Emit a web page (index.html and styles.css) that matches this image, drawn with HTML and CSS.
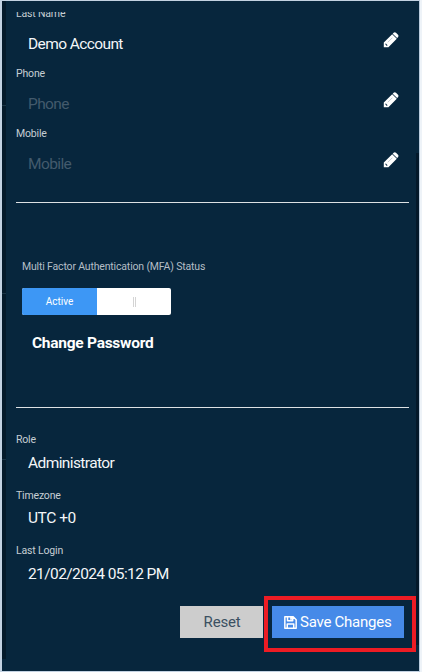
FILE: index.html
```
<!DOCTYPE html>
<html lang="en">
<head>
<meta charset="utf-8">
<title>Account</title>
<link rel="stylesheet" href="styles.css">
</head>
<body>
<svg class="defs" aria-hidden="true">
  <symbol id="pencil" viewBox="0 0 16 16">
    <path fill="#fff" d="M.8 10.6 9.2 2.2l4.6 4.6-8.4 8.4H.8zM9.7 1.7l.9-.9q1.2-.9 2.4 0l2 2q.9 1.2 0 2.4l-.9.9z"/>
    <path fill="#07263d" d="m2.7 11.3 1.9 1.9-.6.5h-.8v-.9H2.3z"/>
    <path stroke="#9aa8b3" stroke-width=".6" d="m4.8 10.3 4.6-4.6"/>
  </symbol>
</svg>
<main class="panel">
  <div class="shade"></div>
  <form class="content">
    <section class="contact">
      <div class="field"><label>Last Name</label><div class="row"><span class="value">Demo Account</span><svg class="pencil"><use href="#pencil"/></svg></div></div>
      <div class="field"><label>Phone</label><div class="row"><span class="value empty">Phone</span><svg class="pencil"><use href="#pencil"/></svg></div></div>
      <div class="field"><label>Mobile</label><div class="row"><span class="value empty">Mobile</span><svg class="pencil"><use href="#pencil"/></svg></div></div>
    </section>
    <section class="security">
      <div class="mfa">Multi Factor Authentication (MFA) Status</div>
      <div class="toggle"><span class="on">Active</span><span class="off"><i></i></span></div>
      <div class="password">Change Password</div>
    </section>
    <section class="details">
      <div class="info"><label>Role</label><span class="value">Administrator</span></div>
      <div class="info"><label>Timezone</label><span class="value utc">UTC +0</span></div>
      <div class="info"><label>Last Login</label><span class="value">21/02/2024 05:12 PM</span></div>
    </section>
    <div class="actions">
      <button type="button" class="reset">Reset</button>
      <div class="highlight">
        <button type="button" class="save">
          <svg class="disk" viewBox="0 0 14 14"><path fill="none" stroke="#fff" stroke-width="1.6" stroke-linejoin="round" d="M.9.9h9l3.2 3.2v9H.9zM3.5 13V8.7h7V13M3.8 1v4h5.6V1"/><path fill="#fff" d="M6.6 1h2v3h-2z"/></svg>
          <span>Save Changes</span>
        </button>
      </div>
    </div>
  </form>
  <div class="track"></div>
</main>
</body>
</html>
```
FILE: styles.css
```
* { box-sizing: border-box; }
body {
  margin: 0;
  height: 672px;
  padding: 1px 3px 1px 2px;
  background: linear-gradient(90deg, #c3d2e2 419px, #b9cbdd 419px, #b9cbdd 420px, #eef3f8 420px);
  font-family: Roboto, "Liberation Sans", sans-serif;
  overflow: hidden;
}
.defs { position: absolute; width: 0; height: 0; }
.panel { display: flex; height: 670px; background: #07263d; }
.shade {
  width: 4px;
  height: 658px;
  background:
    linear-gradient(#1b3546, #1b3546) 0 104px / 4px 1px no-repeat,
    linear-gradient(#1b3546, #1b3546) 0 292px / 4px 1px no-repeat,
    linear-gradient(#1b3546, #1b3546) 0 458px / 4px 1px no-repeat,
    #041a2b;
}
.track { width: 3px; height: 492px; margin-top: 152px; background: #03182a; }
.content { width: 410px; margin-top: 11px; padding-left: 10px; overflow: hidden; }
section { display: flow-root; width: 393px; }
.contact { height: 191px; border-bottom: 1px solid #dde1e4; }
.field { height: 59.75px; }
.field:first-child { margin-top: -6px; }
label { display: block; width: max-content; height: 16px; font-size: 10.5px; line-height: 16px; letter-spacing: -.17px; color: #c6ced4; white-space: nowrap; }
.row { display: flex; justify-content: space-between; height: 44px; padding: 0 10px 0 12px; }
.value { font-size: 15.5px; line-height: 44px; letter-spacing: -.6px; color: #f4f6f8; white-space: nowrap; }
.empty { color: #435a6c; }
.pencil { width: 16px; height: 16px; margin-top: 10px; }
.security { height: 205px; padding: 56px 0 0 6px; border-bottom: 1px solid #dde1e4; }
.mfa { height: 16px; font-size: 10.5px; line-height: 16px; letter-spacing: -.17px; color: #b4bec6; white-space: nowrap; }
.toggle { display: flex; width: 149px; height: 27px; margin-top: 13px; border-radius: 2px; background: #fff; overflow: hidden; }
.on { width: 75px; background: #3d97f5; color: #fff; font-size: 10px; line-height: 27px; text-align: center; }
.off { display: flex; flex: 1; align-items: center; justify-content: center; }
.off i { width: 3px; height: 10px; border: solid #d4d4d4; border-width: 0 1px; }
.password { width: max-content; margin: 16px 0 0 10px; font-size: 15.5px; font-weight: 700; line-height: 24px; letter-spacing: -.27px; color: #fff; white-space: nowrap; }
.details { padding-top: 24px; }
.info { height: 55.5px; }
.info .value { display: block; width: max-content; margin-left: 12px; line-height: 30px; }
.info .utc { line-height: 28px; letter-spacing: -.45px; }
.actions { display: flex; align-items: flex-start; margin-top: -2.5px; padding-left: 164px; }
button { border: 0; padding: 0; font-family: inherit; font-size: 15px; }
.reset { flex: none; width: 83px; height: 32px; margin: 10px 1px 0 0; padding-left: 1px; background: #cdcdcd; color: #3b5062; letter-spacing: -.2px; }
.highlight { flex: none; width: 152px; height: 56px; padding: 6px 8px 0 4px; border: 4px solid #ed1c24; }
.save { display: flex; align-items: center; width: 132px; height: 32px; padding-left: 12px; background: #468ae8; color: #fff; letter-spacing: -.25px; white-space: nowrap; }
.disk { width: 13px; height: 13px; margin-right: 3px; }
```
